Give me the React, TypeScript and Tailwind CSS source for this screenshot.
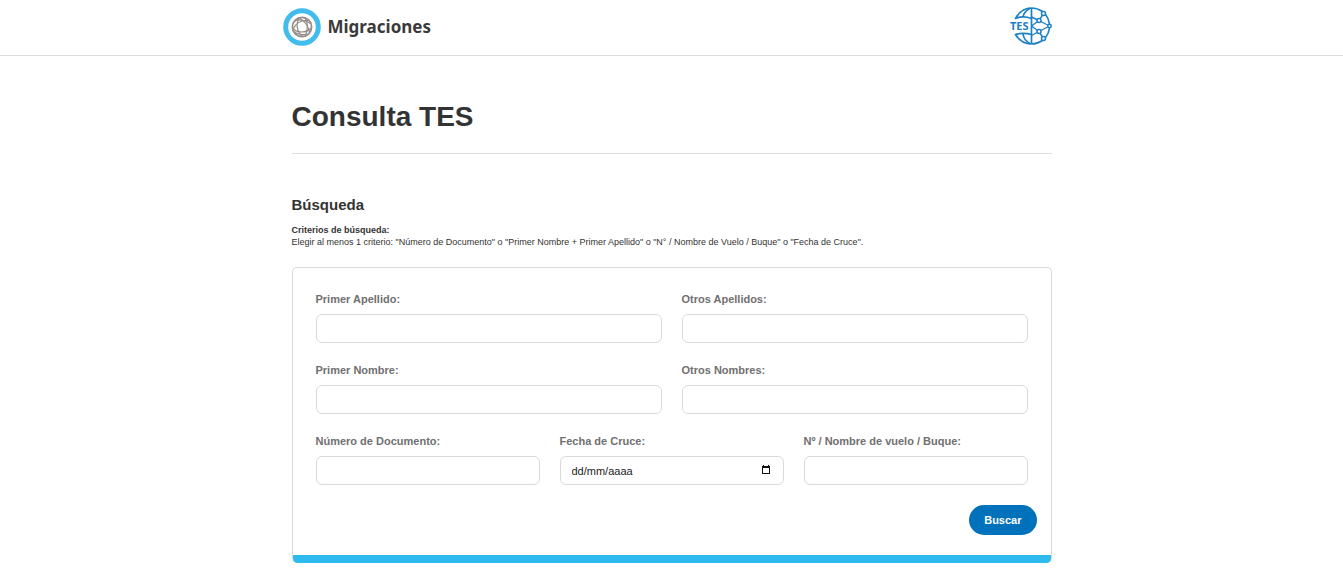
import type { ReactNode } from "react";

function MigracionesMark() {
  return (
    <svg viewBox="0 0 38 38" className="size-[38px]" fill="none" aria-hidden="true">
      <circle cx="19" cy="19" r="16.3" stroke="#41bced" strokeWidth="5" />
      <circle cx="19" cy="19" r="9.6" stroke="#958d89" strokeWidth="1.7" />
      <g stroke="#958d89" strokeWidth="1.2">
        <path d="M11 13.500C15 11 22 11.500 27.500 15.500" />
        <path d="M16 10C20 12 25 17 26.500 24" />
        <path d="M10 20.500C14 25 23 25.500 28 20" />
        <path d="M16.500 10C12.500 15 13.500 23 19.500 28.500" />
        <path d="M22 10C24.500 14 25 21 22.500 27.500" />
        <path d="M11 23.500C14 26.500 20 27.500 25 26" />
        <path d="M10.500 20.500C12.500 15.500 18 12 25.500 12.500" />
      </g>
    </svg>
  );
}

function TesLogo() {
  return (
    <svg viewBox="0 0 42 40" className="h-10 w-[42px]" fill="none" role="img" aria-label="TES">
      <g stroke="#1c80c4" strokeWidth="1.7" strokeLinejoin="round">
        <path d="M21.500 2C14 2 9 6 5.500 12.500C10.500 10.500 16 10.500 21.500 12.500" />
        <path d="M21.500 38C14 38 9 34.500 5.500 28.500C10.500 27 16 27 21.500 28.500" />
        <path d="M20.500 2C16 4.500 13.500 7.500 13 11" />
        <path d="M20.500 38C16 35.500 13.500 32 13 28" />
        <path d="M21.500 2V38" />
        <path d="M21.500 2C26 2 29.500 3.500 32.500 5.500M35.500 8.500C38 11.500 39 14.500 39.500 18M39.500 22C39 26 38 28.500 35.500 31.500M32.500 34.500C29.500 36.500 26 38 21.500 38" />
        <path d="M21.500 20L29 14.500L33.500 7.500M29 14.500L39.500 20L29 25.500L33.500 32.500M29 25.500L21.500 20M29 14.500L21.500 11M29 25.500L21.500 29.500" strokeWidth="1.4" />
      </g>
      <g stroke="#1c80c4" strokeWidth="1.5" fill="white">
        <circle cx="33.5" cy="7.5" r="2" />
        <circle cx="29" cy="14.5" r="2" />
        <circle cx="39.5" cy="20" r="1.7" />
        <circle cx="29" cy="25.5" r="2" />
        <circle cx="33.5" cy="32.5" r="2" />
      </g>
      <text x="0" y="24" fill="#1c80c4" fontSize="11" fontWeight="700" fontFamily="Noto Sans, sans-serif">
        TES
      </text>
    </svg>
  );
}

const inputClass =
  "h-[29px] w-full rounded-md border border-[#d9dadb] bg-white px-[11px] text-[11px] text-[#222] outline-none placeholder:text-[#222] placeholder:opacity-100 focus:border-[#0072bb]";

function Field({ id, label, children }: { id: string; label: string; children?: ReactNode }) {
  return (
    <div>
      <label htmlFor={id} className="mb-2 block text-[11px] leading-[14px] font-bold text-[#707070]">
        {label}
      </label>
      {children ?? <input id={id} name={id} type="text" className={inputClass} />}
    </div>
  );
}

function DateField() {
  return (
    <div className="relative">
      <input id="fecha" name="fecha" type="text" placeholder="dd/mm/aaaa" className={inputClass} />
      <button type="button" aria-label="Abrir calendario" className="absolute top-2 right-3 p-px">
        <svg viewBox="0 0 10 10" className="size-[10px]" aria-hidden="true">
          <path fill="#111" fillRule="evenodd" d="M2 0H3V1H7V0H8V1H9V9H1V1H2ZM2 3V8H8V3Z" />
        </svg>
      </button>
    </div>
  );
}

export default function App() {
  return (
    <div className="bg-white font-['Liberation_Sans',Arial,sans-serif] text-[#333]">
      <header className="border-b border-[#dcdcdc]">
        <div className="mx-auto flex h-[55px] max-w-[778px] items-center justify-between pr-[9px]">
          <a href="#" className="flex items-center gap-[7px] pb-px">
            <MigracionesMark />
            <span className="font-['Noto_Sans',sans-serif] text-[17px] leading-6 font-bold text-[#3a3a3a]">
              Migraciones
            </span>
          </a>
          <a href="#" className="pb-1">
            <TesLogo />
          </a>
        </div>
      </header>

      <main className="mx-auto max-w-[760px] pb-3">
        <h1 className="border-b border-[#dcdcdc] pt-11 pb-5 text-[28px] leading-[33px] font-bold">
          Consulta TES
        </h1>

        <h2 className="mt-[41px] text-[15px] leading-5 font-bold">Búsqueda</h2>
        <p className="mt-[9px] text-[9px] leading-3">
          <strong className="block">Criterios de búsqueda:</strong>
          Elegir al menos 1 criterio: "Número de Documento" o "Primer Nombre + Primer Apellido" o "N° /
          Nombre de Vuelo / Buque" o "Fecha de Cruce".
        </p>

        <form
          className="mt-[19px] overflow-hidden rounded-[5px] border border-b-0 border-[#d9dadb]"
          onSubmit={(event) => event.preventDefault()}
        >
          <div className="space-y-5 px-[23px] pt-6">
            <div className="grid grid-cols-2 gap-5">
              <Field id="apellido" label="Primer Apellido:" />
              <Field id="otrosApellidos" label="Otros Apellidos:" />
              <Field id="nombre" label="Primer Nombre:" />
              <Field id="otrosNombres" label="Otros Nombres:" />
            </div>
            <div className="grid grid-cols-3 gap-5">
              <Field id="documento" label="Número de Documento:" />
              <Field id="fecha" label="Fecha de Cruce:">
                <DateField />
              </Field>
              <Field id="vuelo" label="Nº / Nombre de vuelo / Buque:" />
            </div>
          </div>
          <div className="flex justify-end border-b-8 border-[#2ebaee] px-3.5 py-5">
            <button
              type="submit"
              className="h-[30px] rounded-full bg-[#0072bb] px-[15px] text-[11px] leading-4 font-bold text-white"
            >
              Buscar
            </button>
          </div>
        </form>
      </main>
    </div>
  );
}
